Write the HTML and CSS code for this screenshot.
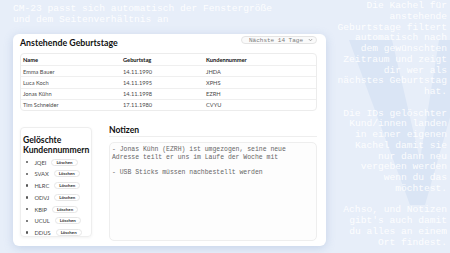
FILE: index.html
```html
<!DOCTYPE html>
<html lang="de">
<head>
<meta charset="utf-8">
<title>CM-23</title>
<link rel="stylesheet" href="styles.css">
</head>
<body>
<svg class="bg-v" width="450" height="253" viewBox="0 0 450 253" aria-hidden="true">
  <polygon points="349,40 392,40 420,160 439,40 472,40 425,205 410,205" fill="#dae5f5"/>
</svg>
<div class="page">
  <main class="left">
    <p class="intro">CM-23 passt sich automatisch der Fenstergröße<br>und dem Seitenverhältnis an</p>
    <section class="card">
      <div class="card-head">
        <h1 class="card-title">Anstehende Geburtstage</h1>
        <div class="select">Nächste 14 Tage
          <svg class="chev" width="5" height="4" viewBox="0 0 5 4"><path d="M0.8 1 L2.5 2.8 L4.2 1" fill="none" stroke="#888" stroke-width="0.7"/></svg>
        </div>
      </div>
      <div class="bdays">
        <div class="row head"><span>Name</span><span>Geburtstag</span><span>Kundennummer</span></div>
        <div class="row"><span>Emma Bauer</span><span>14.11.1990</span><span>JHDA</span></div>
        <div class="row"><span>Luca Koch</span><span>14.11.1995</span><span>XPHS</span></div>
        <div class="row"><span>Jonas Kühn</span><span>14.11.1998</span><span>EZRH</span></div>
        <div class="row"><span>Tim Schneider</span><span>17.11.1980</span><span>CVYU</span></div>
      </div>
      <div class="bottom">
        <aside class="deleted">
          <h2 class="deleted-title">Gelöschte<br>Kundennummern</h2>
          <ul class="id-list">
            <li><span class="code">JQEI</span><span class="btn">Löschen</span></li>
            <li><span class="code">SVAX</span><span class="btn">Löschen</span></li>
            <li><span class="code">HLRC</span><span class="btn">Löschen</span></li>
            <li><span class="code">ODVJ</span><span class="btn">Löschen</span></li>
            <li><span class="code">KBIP</span><span class="btn">Löschen</span></li>
            <li><span class="code">UCUL</span><span class="btn">Löschen</span></li>
            <li><span class="code">DDUS</span><span class="btn">Löschen</span></li>
          </ul>
        </aside>
        <div class="notes">
          <h2 class="notes-title">Notizen</h2>
          <div class="notes-box">- Jonas Kühn (EZRH) ist umgezogen, seine neue
Adresse teilt er uns im Laufe der Woche mit

- USB Sticks müssen nachbestellt werden</div>
        </div>
      </div>
    </section>
  </main>
  <aside class="side">
    <p>Die Kachel für<br>anstehende<br>Geburtstage filtert<br>automatisch nach<br>dem gewünschten<br>Zeitraum und zeigt<br>dir wer als<br>nächstes Geburtstag<br>hat.</p>
    <p>Die IDs gelöschter<br>Kund/innen landen<br>in einer eigenen<br>Kachel damit sie<br>nur dann neu<br>vergeben werden<br>wenn du das<br>möchtest.</p>
    <p>Achso, und Notizen<br>gibt's auch damit<br>du alles an einem<br>Ort findest.</p>
  </aside>
</div>
</body>
</html>
```
FILE: styles.css
```css
html {
  background: #e7eef9;
}
body {
  margin: 0;
  width: 450px;
  height: 253px;
  overflow: hidden;
  font-family: "Lato", "Noto Sans", sans-serif;
}
.bg-v {
  position: absolute;
  left: 0;
  top: 0;
  z-index: -1;
}
.page {
  display: flex;
  padding: 1px 0 0 13px;
}
.left {
  width: 313px;
  flex: none;
}
.intro {
  margin: 2px 0 0;
  font-family: "Liberation Mono", monospace;
  font-size: 9.6px;
  line-height: 11px;
  color: rgba(255, 255, 255, 0.92);
  white-space: nowrap;
}
.card {
  margin-top: 9px;
  height: 212px;
  box-sizing: border-box;
  background: #ffffff;
  border-radius: 6px;
  padding: 2px 9px 0 7px;
  box-shadow: 0 2px 10px rgba(110, 140, 190, 0.28);
}
.card-head {
  display: flex;
  justify-content: space-between;
  align-items: flex-start;
}
.card-title {
  margin: 1px 0 0;
  font-size: 8.8px;
  line-height: 11px;
  font-weight: 700;
  color: #111;
}
.select {
  margin-top: 0;
  height: 8px;
  box-sizing: border-box;
  display: flex;
  align-items: center;
  gap: 5px;
  padding: 0 3px 0 7px;
  border: 1px solid #e4e4e4;
  border-radius: 5px;
  background: #fafafa;
  font-family: "Liberation Mono", monospace;
  font-size: 6px;
  color: #7a7a7a;
  white-space: nowrap;
}
.bdays {
  margin-top: 5px;
  border: 1px solid #ececec;
  border-radius: 4px;
  font-size: 5.7px;
  color: #4a4a4a;
}
.row {
  display: grid;
  grid-template-columns: 100px 83px 1fr;
  height: 11.2px;
  align-items: center;
  border-top: 1px solid #efefef;
  box-sizing: border-box;
}
.row:first-child {
  border-top: none;
}
.row span {
  padding-left: 2px;
}
.row.head {
  font-weight: 700;
  color: #111;
}
.bottom {
  display: flex;
  gap: 17px;
  margin-top: 16px;
}
.deleted {
  width: 72px;
  height: 110px;
  flex: none;
  box-sizing: border-box;
  border: 1px solid #eeeeee;
  border-radius: 4px;
  padding: 8px 0 0 2px;
  overflow-y: auto;
  box-shadow: 0 1px 3px rgba(0, 0, 0, 0.05);
}
.deleted::-webkit-scrollbar {
  width: 2px;
}
.deleted::-webkit-scrollbar-thumb {
  background: #d2d2d2;
  border-radius: 1px;
}
.deleted-title {
  margin: 0;
  font-size: 8.6px;
  line-height: 9.6px;
  font-weight: 700;
  color: #111;
}
.id-list {
  list-style: none;
  margin: 1.3px 0 0;
  padding: 0;
}
.id-list li {
  display: flex;
  align-items: center;
  height: 11.7px;
  font-size: 5.8px;
  color: #4a4a4a;
}
.id-list li::before {
  content: "";
  width: 2.4px;
  height: 2.4px;
  border-radius: 50%;
  background: #555;
  margin: 0 6px 0 3px;
}
.btn {
  margin-left: 5px;
  height: 7px;
  box-sizing: border-box;
  display: flex;
  align-items: center;
  padding: 0 4px;
  border: 1px solid #e6e6e6;
  border-radius: 4px;
  font-size: 4.4px;
  font-weight: 700;
  color: #333;
  background: #fff;
}
.notes {
  flex: 1;
  margin-top: -1px;
}
.notes-title {
  margin: 0;
  font-size: 8.6px;
  line-height: 9px;
  font-weight: 700;
  color: #111;
  padding-bottom: 1px;
  border-bottom: 1px solid #eeeeee;
}
.notes-box {
  margin-top: 5px;
  height: 99px;
  box-sizing: border-box;
  border: 1px solid #eeeeee;
  border-radius: 5px;
  background: #fdfdfd;
  padding: 3px 2px;
  font-family: "Liberation Mono", monospace;
  font-size: 6.45px;
  line-height: 7.7px;
  color: #666;
  white-space: pre;
}
.side {
  flex: 1;
  padding: 0 3px 0 0;
  text-align: right;
  font-family: "Liberation Mono", monospace;
  font-size: 9.6px;
  line-height: 10.75px;
  color: rgba(255, 255, 255, 0.92);
  white-space: nowrap;
}
.side p {
  margin: 0 0 10.75px;
}
```
